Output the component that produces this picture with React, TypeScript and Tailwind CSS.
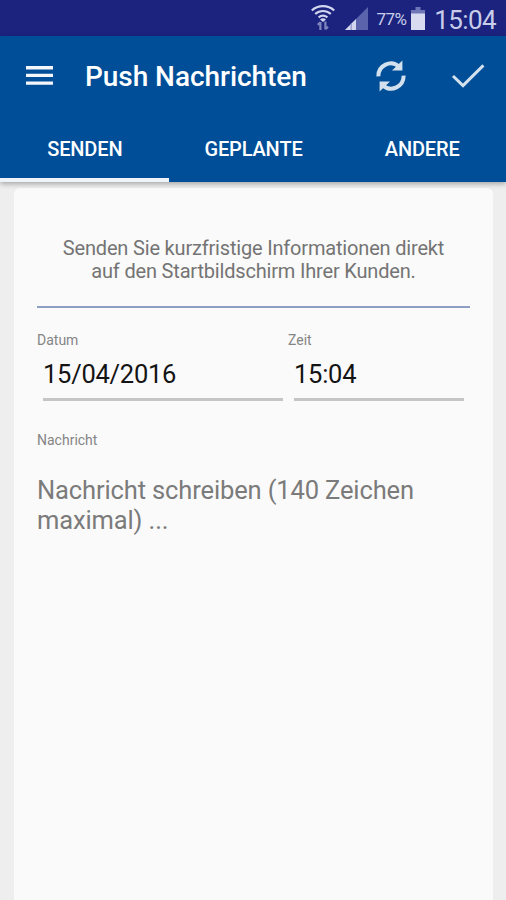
import clsx from 'clsx';

const tabs = ['Senden', 'Geplante', 'Andere'];

function WifiIcon() {
  return (
    <svg className="h-[28px] w-[26px]" viewBox="0 0 26 28" fill="none">
      <g stroke="#d3d6ee" strokeWidth="2.2">
        <path d="M1.8 6.5C8 .7 18 .7 24.2 6.5" />
        <path d="M5.2 10c4.6-4 11-4 15.6 0" />
        <path d="M8.6 13.3c2.8-2.2 6-2.2 8.8 0" />
      </g>
      <path d="M10 15.4a5 5 0 0 1 6 0l-3 2.6z" fill="#d3d6ee" />
      <path d="M10.4 26v-8M7.8 20.9l2.6-2.6M15.4 17.5v8M18 22.7l-2.6 2.6" stroke="#7f85bd" strokeWidth="2.2" />
    </svg>
  );
}

function SignalIcon() {
  return (
    <svg className="h-[24px] w-[24px]" viewBox="0 0 24 24">
      <path d="M0 24 23 1v23z" fill="#5b63ad" />
      <path d="M0 24 11 13v11z" fill="#d3d6ee" />
      <path d="M6.2 17.8v6.2" stroke="#8d93c8" strokeWidth="1.2" />
    </svg>
  );
}

function BatteryIcon() {
  return (
    <svg className="h-[23px] w-[14px]" viewBox="0 0 14 23">
      <path d="M4.5 0h5v3H14v4H0V3h4.5z" fill="#6f76b8" />
      <path d="M0 6.5h14V23H0z" fill="#d9dcf1" />
    </svg>
  );
}

function MenuIcon() {
  return (
    <svg className="h-[20px] w-[27px]" viewBox="0 0 27 20" fill="#f3f6fb">
      <path d="M0 0h27v3.4H0zM0 7.7h27v3.4H0zM0 15.4h27v3.4H0z" />
    </svg>
  );
}

function RefreshIcon() {
  return (
    <svg className="h-[32px] w-[30px]" viewBox="0 0 30 32">
      <g fill="none" stroke="#d3e0ee" strokeWidth="4">
        <path d="M2.4 16.4A12.4 12.6 0 0 1 23 6.6" />
        <path d="M27.6 15.6A12.4 12.6 0 0 1 7 25.4" />
      </g>
      <path d="M26.4.4v10H16zM3.6 31.6v-10H14z" fill="#d3e0ee" />
    </svg>
  );
}

function CheckIcon() {
  return (
    <svg className="h-[26px] w-[34px]" viewBox="0 0 34 26" fill="none">
      <path d="m2 13 10 9.6L32.4 2.4" stroke="#d3e0ee" strokeWidth="3" />
    </svg>
  );
}

function StatusBar() {
  return (
    <div className="flex h-[36px] items-start justify-end bg-[#1b237e] pr-[10px] text-[#c9cdea]">
      <div className="mt-[4px] mr-[9px] flex">
        <WifiIcon />
      </div>
      <div className="mt-[6px] mr-[7px] flex">
        <SignalIcon />
      </div>
      <span className="mt-[8px] mr-[5px] text-[17px] leading-[22px] tracking-[-0.6px]">77%</span>
      <div className="mt-[7px] mr-[9px] flex">
        <BatteryIcon />
      </div>
      <span className="mt-[4px] text-[26px] leading-[32px] tracking-[-0.6px]">15:04</span>
    </div>
  );
}

function Header() {
  return (
    <header className="relative bg-[#004e98] text-white shadow-[0_2px_5px_rgba(0,0,0,0.3)]">
      <div className="flex h-[80px] items-center pr-[21px] pl-[26px]">
        <MenuIcon />
        <h1 className="ml-[32px] flex-1 pt-[2px] text-[28px] leading-[36px] font-medium tracking-[-0.05px] whitespace-nowrap">
          Push Nachrichten
        </h1>
        <RefreshIcon />
        <div className="ml-[45px]">
          <CheckIcon />
        </div>
      </div>
      <nav className="flex h-[66px]">
        {tabs.map((tab, i) => (
          <button
            key={tab}
            className={clsx(
              'flex-1 border-b-4 pt-[3px] pl-px text-[20px] font-medium tracking-[-0.15px] uppercase',
              i === 0 ? 'border-[#eef3fa]' : 'border-transparent',
            )}
          >
            {tab}
          </button>
        ))}
      </nav>
    </header>
  );
}

function Field({ label, value, className }: { label: string; value: string; className: string }) {
  return (
    <div className={className}>
      <p className="text-[14px] leading-[18px] text-[#858585]">{label}</p>
      <p className="ml-[6px] border-b-[3px] border-[#c5c5c5] pt-[9px] pb-[8px] text-[25.5px] leading-[32px] tracking-[-0.25px] text-[#141414]">
        {value}
      </p>
    </div>
  );
}

export default function App() {
  return (
    <div className="flex h-[900px] w-[506px] flex-col overflow-hidden bg-[#eeeeee] font-['Roboto',sans-serif]">
      <StatusBar />
      <Header />
      <main className="mt-[6px] mr-[13px] ml-[14px] flex-1 rounded-t-[6px] bg-[#fafafa] px-[23px] pt-[49px]">
        <p className="text-center text-[20px] leading-[23px] tracking-[-0.18px] text-[#747474]">
          Senden Sie kurzfristige Informationen direkt
          <br />
          auf den Startbildschirm Ihrer Kunden.
        </p>
        <hr className="mt-[23px] border-t-2 border-[#8f9fc4]" />
        <div className="mt-[23px] flex">
          <Field label="Datum" value="15/04/2016" className="w-[246px]" />
          <Field label="Zeit" value="15:04" className="ml-[5px] w-[176px]" />
        </div>
        <p className="mt-[30px] text-[14px] leading-[18px] text-[#858585]">Nachricht</p>
        <p className="mt-[26px] text-[25.5px] leading-[30px] tracking-[-0.13px] text-[#7b7b7b]">
          Nachricht schreiben (140 Zeichen maximal) ...
        </p>
      </main>
    </div>
  );
}
